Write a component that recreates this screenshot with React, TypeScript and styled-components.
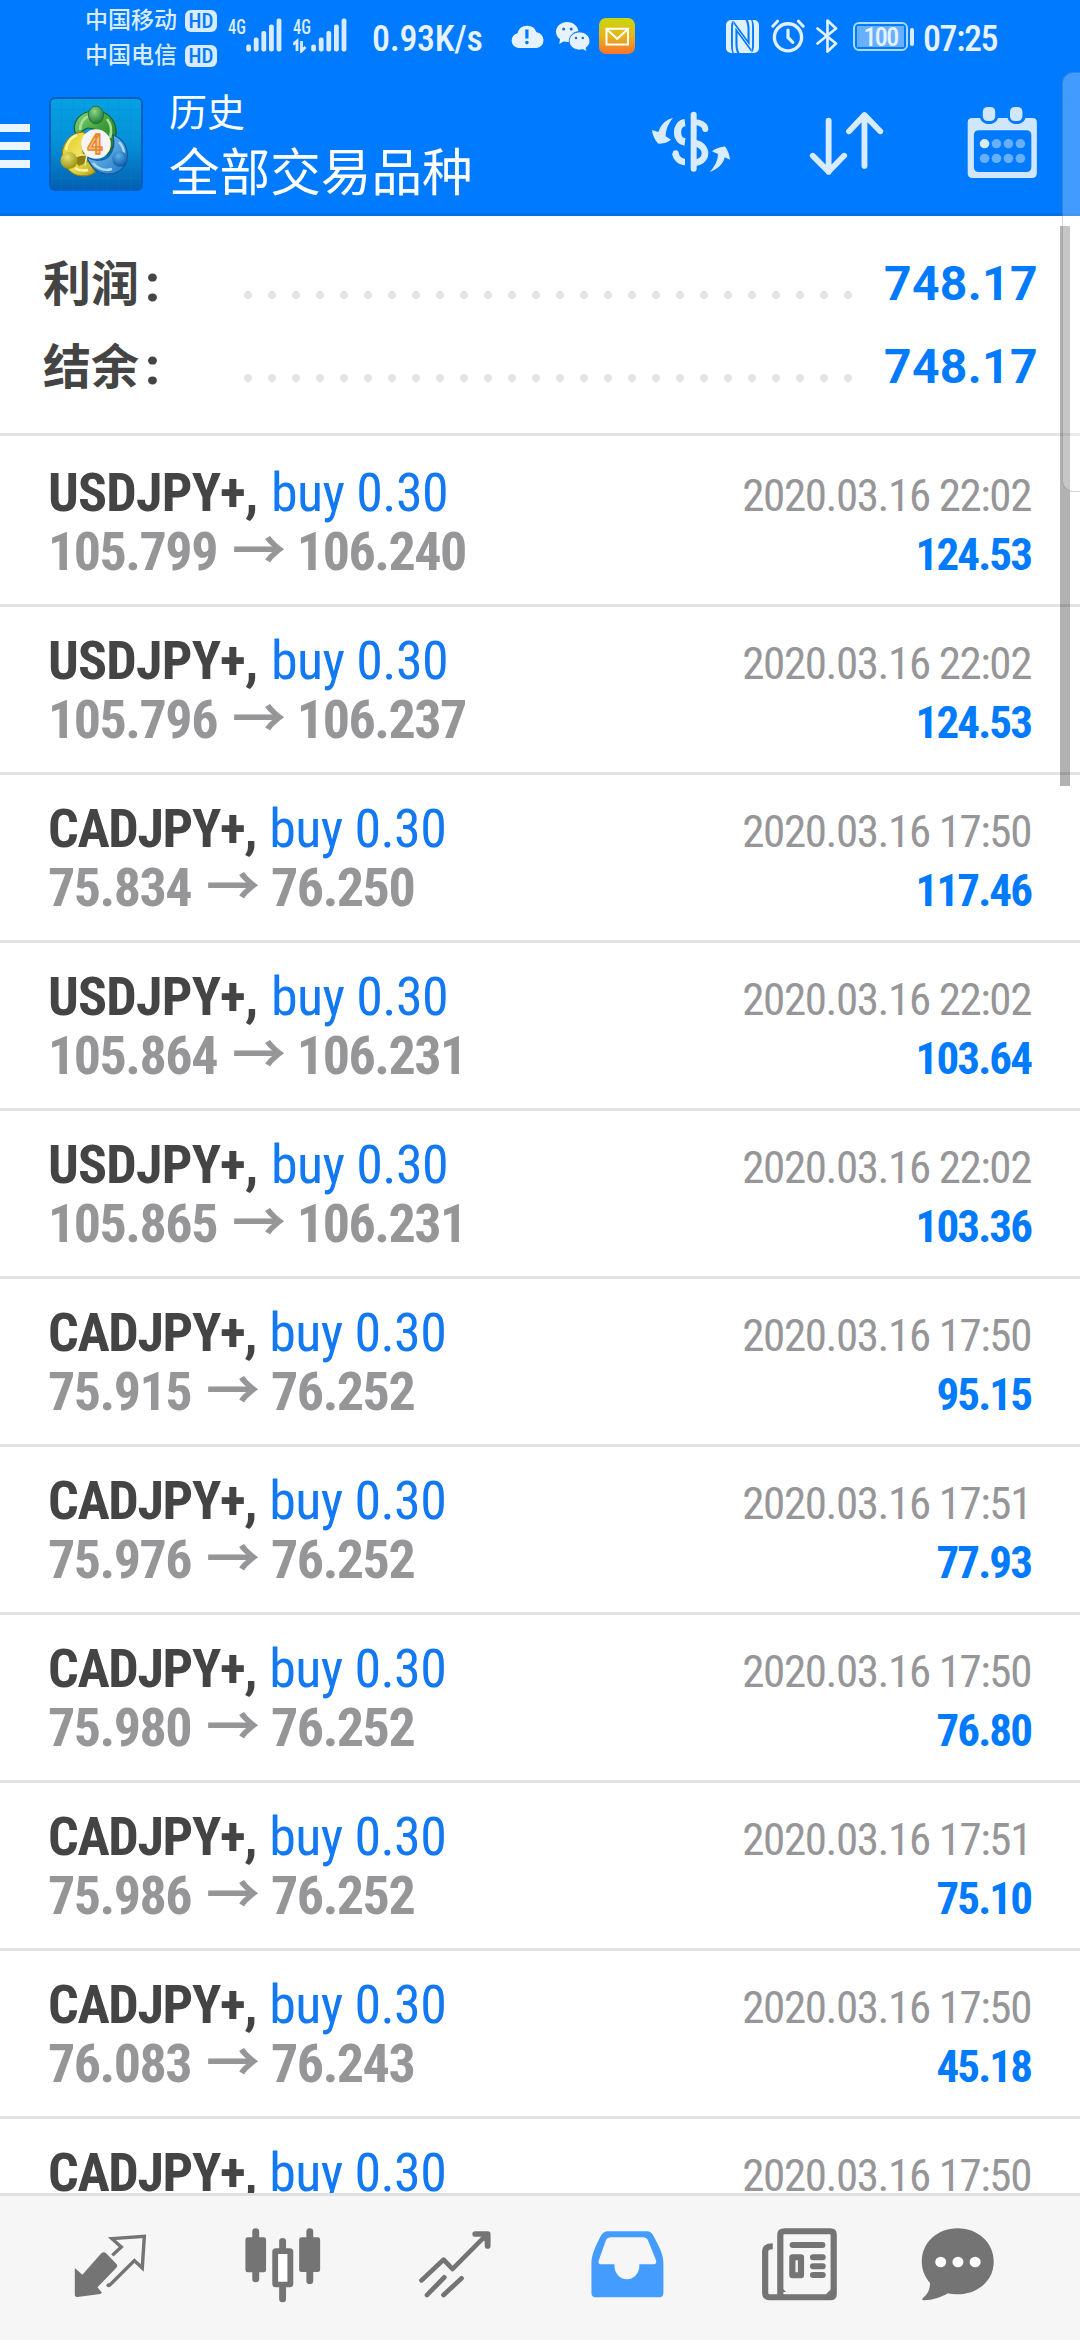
import React from "react";
import styled, { createGlobalStyle } from "styled-components";

const CONDENSED = '"Roboto Condensed", Roboto, "Noto Sans CJK SC", sans-serif';
const CJK = 'Roboto, "Noto Sans CJK SC", sans-serif';
const ICE = "#d9ecff";
const GREY = "#747474";

const GlobalStyle = createGlobalStyle`
  body { margin: 0; background: #fff; }
  * { box-sizing: border-box; }
  svg { display: block; flex: none; }
`;

const Screen = styled.div`
  position: relative;
  width: 1080px;
  height: 2340px;
  display: flex;
  flex-direction: column;
  overflow: hidden;
  background: #fff;
  font-family: ${CONDENSED};
`;

/* ---------- status bar ---------- */

const TopArea = styled.header`
  flex: none;
  height: 216px;
  background: #007aff;
  border-bottom: 3px solid #0470e6;
`;

const StatusBar = styled.div`
  display: flex;
  align-items: flex-start;
  height: 72px;
  padding-left: 85px;
`;

const Item = styled.div<{ $left?: number; $top?: number }>`
  flex: none;
  margin-left: ${(p) => p.$left ?? 0}px;
  margin-top: ${(p) => p.$top ?? 0}px;
`;

const Carriers = styled.div`
  width: 132px;
  padding-top: 3px;
`;

const Carrier = styled.div`
  display: flex;
  align-items: center;
  gap: 8px;
  height: 35px;
  font: 500 23px/35px ${CJK};
  color: ${ICE};
  white-space: nowrap;
`;

const HdBadge = styled.span`
  width: 32px;
  height: 22px;
  border-radius: 6px;
  background: ${ICE};
  color: #007aff;
  font: 500 21px/23px ${CONDENSED};
  text-align: center;
`;

const StatusText = styled.div<{ $left: number; $width: number; $tracking?: number }>`
  flex: none;
  width: ${(p) => p.$width}px;
  margin-left: ${(p) => p.$left}px;
  font: 500 36px/54px ${CONDENSED};
  letter-spacing: ${(p) => p.$tracking ?? -0.3}px;
  padding-top: 12px;
  color: #e6f3ff;
  white-space: nowrap;
`;

const Battery = styled.div`
  display: flex;
  align-items: center;
  gap: 2px;
  margin: 22px 0 0 15px;
`;

const BatteryBody = styled.div`
  width: 55px;
  height: 29px;
  padding: 2px;
  border: 2px solid #a9dbff;
  border-radius: 6px;
`;

const BatteryFill = styled.div`
  height: 21px;
  background: #66b0ff;
  color: #e6f3ff;
  font: 500 26px/22px ${CONDENSED};
  letter-spacing: -1.6px;
  text-align: center;
`;

const BatteryNub = styled.div`
  width: 4px;
  height: 18px;
  border-radius: 2px;
  background: ${ICE};
`;

/* ---------- app bar ---------- */

const AppBar = styled.div`
  display: flex;
  align-items: flex-start;
  height: 141px;
`;

const MenuBars = styled.div`
  display: flex;
  flex-direction: column;
  gap: 10px;
  width: 30px;
  padding-top: 52px;
  span { height: 8px; background: #eaf5ff; }
`;

const Titles = styled.div`
  width: 480px;
  padding: 13px 0 0 26px;
  color: #fff;
  font-family: ${CJK};
`;

const Subtitle = styled.div`
  font-size: 38px;
  line-height: 56px;
`;

const Title = styled.div`
  padding-top: 1px;
  font-size: 50.6px;
  line-height: 64px;
  white-space: nowrap;
`;

/* ---------- summary ---------- */

const Summary = styled.section`
  flex: none;
  height: 220px;
  padding: 26px 42px 0 43px;
  border-bottom: 3px solid #e3e3e3;
`;

const SummaryRow = styled.div`
  display: flex;
  height: 83px;
  line-height: 83px;
  font-weight: 700;
`;

const SummaryLabel = styled.div`
  width: 193px;
  font-family: ${CJK};
  font-size: 48px;
  color: #444;
`;

const Colon = styled.span`
  margin-left: 6px;
  font-size: 52px;
  font-weight: 800;
`;

const Dots = styled.div`
  width: 624px;
  height: 24px;
  margin-top: 41px;
  background: radial-gradient(circle at 12px 12px, #e4e4e4 3.6px, transparent 4.4px) 0 0 / 24px 24px;
`;

const SummaryValue = styled.div`
  flex: 1;
  font-family: Roboto, sans-serif;
  font-size: 48px;
  letter-spacing: 0.4px;
  text-align: right;
  color: #007aff;
`;

/* ---------- deals ---------- */

const Deals = styled.main`
  flex: 1;
  min-height: 0;
  padding-top: 3px;
  overflow: hidden;
`;

const DealRow = styled.article`
  height: 168px;
  padding: 24px 49px 0 48px;
  border-bottom: 3px solid #e3e3e3;
`;

const Line = styled.div`
  display: flex;
  align-items: baseline;
  justify-content: space-between;
  height: 59px;
  line-height: 59px;
  white-space: nowrap;
`;

const Symbol = styled.div<{ $tracking: number }>`
  font-size: 54px;
  font-weight: 700;
  letter-spacing: ${(p) => p.$tracking}px;
  color: #444;
`;

const Volume = styled.span`
  margin-left: 2px;
  font-weight: 400;
  letter-spacing: -0.6px;
  color: #1279f3;
`;

const Prices = styled.div`
  font-size: 54px;
  font-weight: 700;
  letter-spacing: -1.5px;
  color: #969698;
`;

const Arrow = styled.span`
  margin: 0 0 0 4px;
  font: 700 54px/0 "Noto Sans CJK SC", sans-serif;
  letter-spacing: 0;
`;

const Time = styled.div`
  font-size: 45px;
  letter-spacing: -1.4px;
  color: #969698;
`;

const Profit = styled.div`
  font-size: 45px;
  font-weight: 700;
  letter-spacing: -1.9px;
  color: #007aff;
`;

/* ---------- tab bar ---------- */

const TabBar = styled.nav`
  flex: none;
  display: flex;
  height: 147px;
  padding: 0 50px 0 24px;
  border-top: 3px solid #e0e0e0;
  background: #f6f6f6;
`;

const Tab = styled.div<{ $width?: number }>`
  display: flex;
  justify-content: center;
  width: ${(p) => p.$width ?? 172.4}px;
  padding-top: 30px;
`;

/* ---------- overlays ---------- */

const ScrollThumb = styled.div`
  position: absolute;
  left: 1060px;
  top: 226px;
  width: 10px;
  height: 560px;
  background: rgba(0, 0, 0, 0.3);
`;

const EdgePanel = styled.div`
  position: absolute;
  left: 1062px;
  top: 72px;
  width: 30px;
  height: 420px;
  border: 1px solid rgba(0, 0, 0, 0.16);
  border-radius: 11px;
  background: rgba(255, 255, 255, 0.26);
`;

/* ---------- icons ---------- */

type GlyphProps = { box: [number, number, number, number]; w: number; h: number; children: React.ReactNode };
const Glyph = ({ box, w, h, children }: GlyphProps) => (
  <svg width={w} height={h} viewBox={box.join(" ")} preserveAspectRatio="none" fill="none" strokeLinecap="round" strokeLinejoin="round">
    {children}
  </svg>
);

const Signal = ({ data }: { data?: boolean }) => (
  <svg width="54" height="46" viewBox="0 -10 54 46">
    <text x="0" y="17" fontSize="20.5" fontWeight="500" fill={ICE} textLength="18" lengthAdjust="spacingAndGlyphs" fontFamily='"Roboto Condensed", sans-serif'>4G</text>
    {[7, 14, 20.5, 27, 33].map((h, i) => (
      <rect key={h} x={18.2 + i * 7.6} y={34.5 - h} width="4.8" height={h} rx="2" fill={ICE} />
    ))}
    {data && <path d="M0 27.5L4 24v10M8.500 24v10l4-4" stroke={ICE} strokeWidth="2.8" fill="none" />}
  </svg>
);

const CloudAlert = () => (
  <svg width="34" height="24" viewBox="0 0 34 24">
    <path d="M7.5 24a7.5 7.5 0 0 1-1-14.8 10 10 0 0 1 19-1A8 8 0 0 1 26 24z" fill="#e6f3ff" />
    <path d="M15.9 5.5v9" stroke="#007aff" strokeWidth="3.2" />
    <circle cx="15.9" cy="18.6" r="1.8" fill="#007aff" />
  </svg>
);

const WeChat = () => (
  <svg width="34" height="30" viewBox="0 0 34 30">
    <path d="M11.2 0C5 0 0 4.3 0 9.800c0 3 1.500 5.700 4 7.500L3.200 22l4.500-2.600c1.100.3 2.300.5 3.500.5l2 0C13 13 18 9.500 22.500 9.300 21.800 4 17 0 11.200 0z" fill="#e6f3ff" />
    <path d="M23.500 10c-5.700 0-10.300 4-10.300 9s4.600 9 10.300 9c1.200 0 2.300-.2 3.400-.5l3.900 2.300-.8-4c2.400-1.700 3.900-4.100 3.900-6.800 0-5-4.700-9-10.400-9z" fill="#e6f3ff" stroke="#007aff" strokeWidth=".8" />
    <g fill="#1b70d4"><circle cx="7.600" cy="7" r="1.500" /><circle cx="15.200" cy="7" r="1.500" /><circle cx="20" cy="16" r="1.300" /><circle cx="26.800" cy="16" r="1.300" /></g>
  </svg>
);

const Mail = () => (
  <svg width="36" height="36" viewBox="0 0 36 36">
    <defs>
      <linearGradient id="mail" x1="0" y1="0" x2="0" y2="1">
        <stop offset="0" stopColor="#c9d80c" /><stop offset=".5" stopColor="#e5b51a" /><stop offset="1" stopColor="#f9732c" />
      </linearGradient>
    </defs>
    <rect width="36" height="36" rx="7" fill="url(#mail)" />
    <path d="M7.500 10.800h21.500v15.600H7.500zM8 11.500l10.200 9.300L28.500 11.500" stroke="#fff" strokeWidth="2" fill="none" />
  </svg>
);

const Nfc = () => (
  <svg width="33" height="33" viewBox="0 0 33 33">
    <rect width="33" height="33" rx="5" fill="#dff0ff" />
    <g fill="#007aff">
      <path d="M7 0l14.500 20V10c0-4-.4-7-2-10h2.300c1.400 3 1.800 6 1.800 10v15.500L8.500 5z" />
      <path d="M26 33L11.500 13v10c0 4 .4 7 2 10h-2.300c-1.400-3-1.800-6-1.800-10V7.500L24.500 28z" />
      <path d="M6.200 1c-1 2.500-1.200 5-1.200 8v15c0 4 .3 6.500 1.500 9h1.300c-.9-2.500-.9-5-.9-9V9c0-3 .1-4 .9-6zM26.800 32c1-2.500 1.200-5 1.200-8V9c0-4-.3-6.500-1.500-9h-1.300c.9 2.500.9 5 .9 9v15c0 3-.1 4-.9 6z" />
    </g>
  </svg>
);

const Alarm = () => (
  <svg width="34" height="34" viewBox="0 0 34 34" fill="none" stroke="#e0f0ff" strokeLinecap="round">
    <circle cx="17" cy="18.300" r="13.600" strokeWidth="3.400" />
    <path d="M17 11v7.500l4.800 4.800" strokeWidth="3.200" />
    <path d="M1.800 7.200l4.700-5M32.200 7.200l-4.700-5" strokeWidth="3" />
  </svg>
);

const Bluetooth = () => (
  <svg width="22" height="36" viewBox="0 0 22 36" fill="none" stroke="#e0f0ff" strokeWidth="2.700" strokeLinecap="round" strokeLinejoin="round">
    <path d="M1.500 10.500L20 25.500l-8.500 8V2.500l8.500 8L1.500 25.500" />
  </svg>
);

const Logo = () => (
  <svg width="94" height="94" viewBox="0 0 94 94">
    <defs>
      <linearGradient id="tile" x1="0" y1="0" x2="0" y2="1"><stop offset="0" stopColor="#06a2e2" /><stop offset=".5" stopColor="#0590d8" /><stop offset="1" stopColor="#045fae" /></linearGradient>
      <linearGradient id="green" x1="0" y1="0" x2="1" y2="1"><stop offset="0" stopColor="#8fd47c" /><stop offset=".5" stopColor="#3f9f3c" /><stop offset="1" stopColor="#1f6f22" /></linearGradient>
      <linearGradient id="yellow" x1="0" y1="0" x2="1" y2="1"><stop offset="0" stopColor="#e2c81c" /><stop offset=".5" stopColor="#efe25a" /><stop offset="1" stopColor="#b9a51e" /></linearGradient>
      <linearGradient id="blue" x1="0" y1="0" x2="1" y2="1"><stop offset="0" stopColor="#8fd0f6" /><stop offset="1" stopColor="#1a74c4" /></linearGradient>
      <radialGradient id="gball" cx=".4" cy=".3" r=".7"><stop offset="0" stopColor="#8ed68a" /><stop offset="1" stopColor="#1e7a34" /></radialGradient>
      <radialGradient id="yball" cx=".4" cy=".3" r=".7"><stop offset="0" stopColor="#e8e070" /><stop offset="1" stopColor="#9a9410" /></radialGradient>
      <radialGradient id="bball" cx=".4" cy=".3" r=".7"><stop offset="0" stopColor="#5cb2ea" /><stop offset="1" stopColor="#0c5aa8" /></radialGradient>
    </defs>
    <rect x="1" y="1" width="92" height="92" rx="5" fill="url(#tile)" stroke="#0560bd" strokeWidth="2" />
    <path d="M12.500 1v92M24 1v92M35.500 1v92M47 1v92M58.500 1v92M70 1v92M81.500 1v92M1 12.500h92M1 24h92M1 35.500h92M1 47h92M1 58.500h92M1 70h92M1 81.500h92" stroke="#0a7fcc" strokeOpacity=".25" />
    <path d="M30 38c-9-1-6-24 16-24 16 0 22 13 21 24-1 10-5 16-9 20l-4-12-9-14-6-1c-3 1-7 3-9 7z" fill="url(#green)" stroke="#17602a" strokeWidth="1.200" />
    <path d="M31 33c0-7 4-13 10-14M58 22c4 5 5 12 3 19" stroke="#a6e096" strokeWidth="2.600" fill="none" />
    <path d="M14 62c-3-13 6-26 20-27l4 3c-4 4-6 10-4 17 3 8 9 13 12 20-6 5-20 6-27-3z" fill="url(#yellow)" stroke="#94850f" strokeWidth="1.200" />
    <path d="M17 53c1-7 5-13 11-15M26 71c4 3 8 3 13 2" stroke="#fbf3a0" strokeWidth="2.600" fill="none" />
    <path d="M64 38c11 4 16 14 14 25-2 9-11 15-20 14-10-1-17-8-20-17 8 5 17 4 22-1 5-6 6-13 4-21z" fill="url(#blue)" stroke="#12599e" strokeWidth="1.200" />
    <path d="M44 66c5 6 12 8 19 6M70 45c4 4 5 8 5 13" stroke="#a9dcf8" strokeWidth="2.400" fill="none" />
    <path d="M24 62l12-5 3 8-9 4z" fill="#8e7f14" />
    <path d="M30 58l8 0-2 10" stroke="#f5ec8c" strokeWidth="1.600" fill="none" />
    <ellipse cx="47" cy="18" rx="7.600" ry="8.800" fill="url(#gball)" stroke="#1c6c30" strokeWidth=".8" />
    <circle cx="20" cy="63.500" r="8.500" fill="url(#yball)" />
    <circle cx="71" cy="62" r="7.800" fill="url(#bball)" />
    <circle cx="47" cy="47" r="14.800" fill="#f7f4f4" />
    <text x="46" y="57" textAnchor="middle" fontSize="27" fontWeight="700" fontFamily="Roboto, sans-serif" fill="#f6c48c" stroke="#e98428" strokeWidth="1.400">4</text>
  </svg>
);

const CurrencyIcon = () => (
  <svg width="84" height="66" viewBox="27 46 252 198" fill="none" stroke={ICE}>
    <path d="M158 60v162" strokeWidth="18" strokeLinecap="round" />
    <path d="M132 84c-30 4-30 54 0 58" strokeWidth="22" />
    <path d="M103 176c2 14 14 26 29 26" strokeWidth="20" />
    <circle cx="104" cy="176" r="9" fill={ICE} stroke="none" />
    <path d="M160 83c18 0 32 8 33 20" strokeWidth="18" strokeLinecap="round" />
    <path d="M160 146c18 0 32 14 32 30s-14 28-32 28" strokeWidth="20" />
    <path d="M96 70c-20 4-36 18-44 42l-19-6c1 14 8 28 16 38q3 4 8 3c12-1 22-4 33-12l-16-10c0-18 8-40 22-55z" fill={ICE} stroke="none" />
    <path d="M205 232c22-6 42-22 46-44l16 7c-1-14-6-26-12-36q-3-4-8-3c-12 1-24 6-34 14l18 8c0 18-10 40-26 54z" fill={ICE} stroke="none" />
  </svg>
);

const SortIcon = () => (
  <Glyph box={[780, 333, 220, 195]} w={75.8} h={65}>
    <path d="M837 362v154M791 467l46 48 45-48M941 498V345M896 394l45-49 46 49" stroke={ICE} strokeWidth="17" />
  </Glyph>
);

const CalendarIcon = () => (
  <Glyph box={[1240, 318, 206, 218]} w={70.9} h={72.7}>
    <path fillRule="evenodd" fill="#cfe6fb" d="M1256 354h22c4 12 14 18 26 18s22-6 26-18h28c4 12 14 18 26 18s22-6 26-18h20q13 0 13 13v153q0 14-14 14h-173q-14 0-14-14V367q0-13 14-13zM1275 391q-15 0-15 15v94q0 16 15 16h137q15 0 15-16v-94q0-15-15-15z" />
    <rect x="1286" y="321" width="36" height="42" rx="14" fill="#cfe6fb" />
    <rect x="1365" y="321" width="36" height="42" rx="14" fill="#cfe6fb" />
    {[0, 1, 2, 3].map((i) => (
      <g key={i}>
        <circle cx={1291 + i * 34.7} cy="431" r="14" fill={i === 0 ? ICE : "#66b0fb"} />
        <circle cx={1291 + i * 34.7} cy="475" r="14" fill="#66b0fb" />
      </g>
    ))}
  </Glyph>
);

const QuotesIcon = () => (
  <Glyph box={[205, 380, 230, 240]} w={79.2} h={80}>
    <path fill={GREY} d="M216 506l22 20 55-64q7-6 14 0l30 32q5 6-1 12l-54 58 13 16-5 4-66 9q-8 1-8-8z" />
    <path stroke={GREY} strokeWidth="10" strokeLinecap="butt" strokeLinejoin="miter" d="M325 468l26-25-27-25 94-7-6 95-23-22-73 75" />
    <circle cx="314" cy="558" r="6" fill={GREY} />
  </Glyph>
);

const ChartIcon = () => (
  <Glyph box={[702, 380, 232, 240]} w={79.9} h={80}>
    <g fill={GREY}>
      <rect x="709" y="414" width="60" height="105" rx="7" />
      <rect x="729" y="387" width="20" height="162" rx="10" />
      <rect x="865" y="414" width="61" height="104" rx="7" />
      <rect x="886" y="387" width="20" height="167" rx="10" />
      <rect x="807" y="416" width="20" height="50" rx="10" />
      <rect x="807" y="550" width="20" height="59" rx="10" />
    </g>
    <rect x="795.500" y="455.500" width="44" height="100" rx="2" fill="#fff" stroke={GREY} strokeWidth="17" />
  </Glyph>
);

const TradeIcon = () => (
  <Glyph box={[1202, 380, 230, 240]} w={79.2} h={80}>
    <g stroke={GREY} strokeWidth="14">
      <path d="M1221 543l64-62 26 28 98-102M1237 587l50-53M1285 587l52-50" />
      <path d="M1377 404h36v36" strokeWidth="17" />
    </g>
    <path d="M1392 412h22v24z" fill={GREY} />
  </Glyph>
);

const HistoryIcon = () => (
  <Glyph box={[137, 380, 230, 240]} w={79.2} h={80}>
    <path fillRule="evenodd" fill="#449cff" d="M195 396h113q12 0 18 12c18 34 30 58 30 84v88q0 14-14 14H161q-14 0-14-14v-88c0-26 12-52 27-82q7-14 21-14zM204 414q-11 0-15 9l-20 58q-5 14 5 14h40c-2 24 14 45 36 45s38-21 36-45h39q14 0 9-14l-22-56q-4-11-16-11z" />
  </Glyph>
);

const NewsIcon = () => (
  <Glyph box={[640, 380, 232, 240]} w={79.9} h={80}>
    <g stroke={GREY}>
      <path d="M712 396h132q10 0 10 10v178q0 10-10 10H668q-13 0-13-13V456q0-15 22-15M699 590V406q0-10 13-10" strokeWidth="18" strokeLinecap="butt" />
      <path d="M735 437h86M794 474h28M794 501h28M794 527h28" strokeWidth="18" />
      <rect x="734" y="474" width="25" height="54" strokeWidth="18" />
    </g>
    <path fill={GREY} d="M700 578l16 0-8-8zM846 570v16h-16z" />
  </Glyph>
);

const ChatIcon = () => (
  <Glyph box={[1098, 380, 230, 240]} w={79.2} h={80}>
    <path fill={GREY} d="M1213 387c60 0 105 44 105 100s-46 98-105 98c-10 0-20-1-28-3-20 12-46 21-68 21q-12 0-4-8c14-10 20-26 20-44-15-18-24-40-24-64 0-56 44-100 104-100z" />
    <g fill="#fff"><circle cx="1164" cy="488" r="16" /><circle cx="1214" cy="488" r="16" /><circle cx="1264" cy="488" r="16" /></g>
  </Glyph>
);

/* ---------- data ---------- */

type Deal = [symbol: string, open: string, close: string, time: string, profit: string];
const deals: Deal[] = [
  ["USDJPY+", "105.799", "106.240", "22:02", "124.53"],
  ["USDJPY+", "105.796", "106.237", "22:02", "124.53"],
  ["CADJPY+", "75.834", "76.250", "17:50", "117.46"],
  ["USDJPY+", "105.864", "106.231", "22:02", "103.64"],
  ["USDJPY+", "105.865", "106.231", "22:02", "103.36"],
  ["CADJPY+", "75.915", "76.252", "17:50", "95.15"],
  ["CADJPY+", "75.976", "76.252", "17:51", "77.93"],
  ["CADJPY+", "75.980", "76.252", "17:50", "76.80"],
  ["CADJPY+", "75.986", "76.252", "17:51", "75.10"],
  ["CADJPY+", "76.083", "76.243", "17:50", "45.18"],
  ["CADJPY+", "", "", "17:50", ""],
];

export default function App() {
  return (
    <Screen>
      <GlobalStyle />
      <TopArea>
        <StatusBar>
          <Carriers>
            <Carrier>中国移动<HdBadge>HD</HdBadge></Carrier>
            <Carrier>中国电信<HdBadge>HD</HdBadge></Carrier>
          </Carriers>
          <Item $left={11} $top={7}><Signal /></Item>
          <Item $left={11} $top={7}><Signal data /></Item>
          <StatusText $left={25} $width={114}>0.93K/s</StatusText>
          <Item $left={25} $top={24}><CloudAlert /></Item>
          <Item $left={11} $top={22}><WeChat /></Item>
          <Item $left={9} $top={18}><Mail /></Item>
          <Item $left={91} $top={20}><Nfc /></Item>
          <Item $left={12} $top={19}><Alarm /></Item>
          <Item $left={11} $top={18}><Bluetooth /></Item>
          <Battery>
            <BatteryBody><BatteryFill>100</BatteryFill></BatteryBody>
            <BatteryNub />
          </Battery>
          <StatusText $left={9} $width={80} $tracking={-1.4}>07:25</StatusText>
        </StatusBar>
        <AppBar>
          <MenuBars><span /><span /><span /></MenuBars>
          <Item $left={19} $top={25}><Logo /></Item>
          <Titles>
            <Subtitle>历史</Subtitle>
            <Title>全部交易品种</Title>
          </Titles>
          <Item $left={27} $top={38}><CurrencyIcon /></Item>
          <Item $left={75} $top={39}><SortIcon /></Item>
          <Item $left={82} $top={34}><CalendarIcon /></Item>
        </AppBar>
      </TopArea>

      <Summary>
        <SummaryRow><SummaryLabel>利润<Colon>:</Colon></SummaryLabel><Dots /><SummaryValue>748.17</SummaryValue></SummaryRow>
        <SummaryRow><SummaryLabel>结余<Colon>:</Colon></SummaryLabel><Dots /><SummaryValue>748.17</SummaryValue></SummaryRow>
      </Summary>

      <Deals>
        {deals.map(([symbol, open, close, time, profit], i) => (
          <DealRow key={i}>
            <Line>
              <Symbol $tracking={symbol.startsWith("CAD") ? -1.35 : -0.8}>{symbol}, <Volume>buy 0.30</Volume></Symbol>
              <Time>2020.03.16 {time}</Time>
            </Line>
            {open && (
              <Line>
                <Prices>{open} <Arrow>→</Arrow> {close}</Prices>
                <Profit>{profit}</Profit>
              </Line>
            )}
          </DealRow>
        ))}
      </Deals>

      <TabBar>
        <Tab><QuotesIcon /></Tab>
        <Tab><ChartIcon /></Tab>
        <Tab><TradeIcon /></Tab>
        <Tab><HistoryIcon /></Tab>
        <Tab><NewsIcon /></Tab>
        <Tab $width={144}><ChatIcon /></Tab>
      </TabBar>

      <ScrollThumb />
      <EdgePanel />
    </Screen>
  );
}
